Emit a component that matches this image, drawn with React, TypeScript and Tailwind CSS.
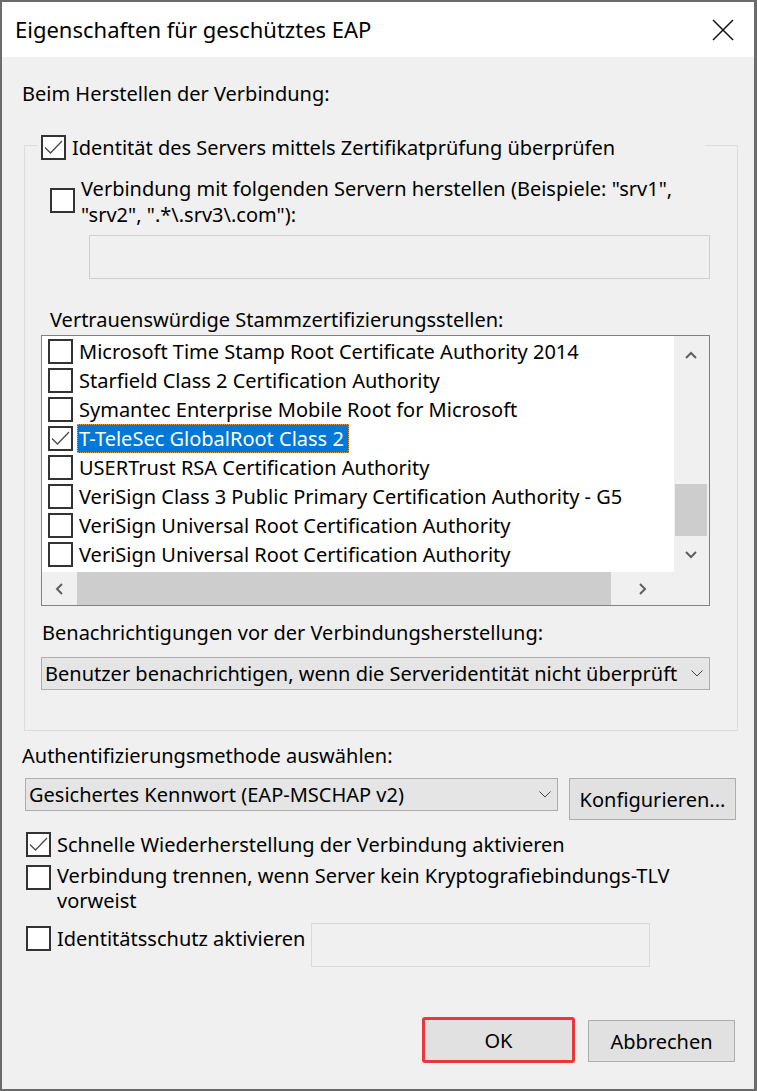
import type { ReactNode } from 'react';

const certs = [
  { name: 'Microsoft Time Stamp Root Certificate Authority 2014', checked: false },
  { name: 'Starfield Class 2 Certification Authority', checked: false },
  { name: 'Symantec Enterprise Mobile Root for Microsoft', checked: false },
  { name: 'T-TeleSec GlobalRoot Class 2', checked: true, selected: true },
  { name: 'USERTrust RSA Certification Authority', checked: false },
  { name: 'VeriSign Class 3 Public Primary Certification Authority - G5', checked: false },
  { name: 'VeriSign Universal Root Certification Authority', checked: false },
  { name: 'VeriSign Universal Root Certification Authority', checked: false },
];

function CheckBox({ checked = false, className = '' }: { checked?: boolean; className?: string }) {
  return (
    <span
      className={`flex h-[25px] w-[25px] shrink-0 items-center justify-center border-2 border-[#333333] bg-white ${className}`}
    >
      {checked && (
        <svg width="21" height="21" viewBox="0 0 21 21" fill="none">
          <path d="M2 10.5 L7.5 16 L19 4" stroke="#4a4a4a" strokeWidth="1.3" />
        </svg>
      )}
    </span>
  );
}

function Arrow({ dir }: { dir: 'up' | 'down' | 'left' | 'right' }) {
  const d = {
    up: 'M1 7 L6 2 L11 7',
    down: 'M1 2 L6 7 L11 2',
    left: 'M7 1 L2 6 L7 11',
    right: 'M2 1 L7 6 L2 11',
  }[dir];
  const vertical = dir === 'up' || dir === 'down';
  return (
    <svg width={vertical ? 12 : 9} height={vertical ? 9 : 12} viewBox={vertical ? '0 0 12 9' : '0 0 9 12'} fill="none">
      <path d={d} stroke="#606060" strokeWidth="2" />
    </svg>
  );
}

function DropChevron() {
  return (
    <svg width="12" height="7" viewBox="0 0 12 7" fill="none">
      <path d="M0.5 0.5 L6 6 L11.5 0.5" stroke="#444" strokeWidth="1" />
    </svg>
  );
}

function Select({ children, className = '' }: { children: ReactNode; className?: string }) {
  return (
    <div className={`flex h-[33px] items-center border border-[#adadad] bg-[#e5e5e5] pl-[3px] pr-[6px] ${className}`}>
      <span className="flex-1 overflow-hidden whitespace-nowrap">{children}</span>
      <span className="ml-[8px] flex items-center">
        <DropChevron />
      </span>
    </div>
  );
}

export default function App() {
  return (
    <div className="flex h-[1091px] w-[757px] flex-col border-2 border-r-[3px] border-[#6b6b6b] bg-[#f0f0f0] font-['Noto_Sans','Liberation_Sans',sans-serif] text-[20px] leading-[27px] text-black">
      {/* title bar */}
      <div className="flex h-[55px] shrink-0 items-center justify-between bg-white pl-[13px] pr-[20px]">
        <span className="text-[22px]">Eigenschaften für geschütztes EAP</span>
        <svg width="22" height="22" viewBox="0 0 22 22" fill="none">
          <path d="M1 1 L21 21 M21 1 L1 21" stroke="#111" strokeWidth="1.5" />
        </svg>
      </div>

      <p className="ml-[20px] mt-[23px]">Beim Herstellen der Verbindung:</p>

      {/* group box */}
      <div className="ml-[22px] mt-[38px] w-[714px] border border-[#dcdcdc] pb-[40px]">
        <div className="-mt-[12px] ml-[12px] flex h-[27px] w-[668px] items-center gap-[6px] bg-[#f0f0f0] pl-[4px]">
          <CheckBox checked />
          <span>Identität des Servers mittels Zertifikatprüfung überprüfen</span>
        </div>

        <div className="ml-[25px] mt-[15px] flex items-start gap-[6px]">
          <CheckBox className="mt-[12px]" />
          <span className="leading-[26px]">
            Verbindung mit folgenden Servern herstellen (Beispiele: "srv1",
            <br />
            "srv2", ".*\.srv3\.com"):
          </span>
        </div>

        <div className="ml-[64px] mt-[7px] h-[44px] w-[621px] border border-[#cfcfcf]" />

        <p className="ml-[25px] mt-[27px]">Vertrauenswürdige Stammzertifizierungsstellen:</p>

        {/* cert list */}
        <div className="ml-[16px] mt-[2px] flex h-[271px] w-[669px] flex-col border border-[#828282] bg-[#f0f0f0]">
          <div className="flex h-[236px]">
            <div className="w-[632px] overflow-hidden bg-white pl-[6px] pt-[1px]">
              {certs.map((c, i) => (
                <div key={i} className="flex h-[29px] items-center whitespace-nowrap">
                  <CheckBox checked={c.checked} className="h-[24px] w-[24px]" />
                  {c.selected ? (
                    <span className="ml-[4px] flex h-[29px] items-center border border-dotted border-[#e0a050] bg-[#0078d7] pl-[1px] pr-[4px] text-white">
                      {c.name}
                    </span>
                  ) : (
                    <span className="ml-[6px]">{c.name}</span>
                  )}
                </div>
              ))}
            </div>
            <div className="flex w-[33px] flex-col items-center">
              <div className="flex h-[33px] items-center justify-center pt-[5px]">
                <Arrow dir="up" />
              </div>
              <div className="h-[115px]" />
              <div className="h-[52px] w-[32px] bg-[#cdcdcd]" />
              <div className="flex flex-1 items-center justify-center">
                <Arrow dir="down" />
              </div>
            </div>
          </div>
          <div className="flex h-[33px] w-[632px] items-center">
            <div className="flex w-[35px] items-center justify-center">
              <Arrow dir="left" />
            </div>
            <div className="h-[33px] w-[534px] bg-[#cdcdcd]" />
            <div className="flex flex-1 items-center justify-center">
              <Arrow dir="right" />
            </div>
          </div>
        </div>

        <p className="ml-[17px] mt-[13px]">Benachrichtigungen vor der Verbindungsherstellung:</p>
        <Select className="ml-[16px] mt-[11px] w-[669px]">
          Benutzer benachrichtigen, wenn die Serveridentität nicht überprüft
        </Select>
      </div>

      <p className="ml-[20px] mt-[11px]">Authentifizierungsmethode auswählen:</p>
      <div className="ml-[23px] mt-[9px] flex items-start gap-[11px]">
        <Select className="w-[533px]">Gesichertes Kennwort (EAP-MSCHAP v2)</Select>
        <button className="h-[42px] w-[167px] border border-[#adadad] bg-[#e1e1e1]">Konfigurieren...</button>
      </div>

      <div className="ml-[24px] mt-[11px] flex items-start gap-[6px]">
        <CheckBox checked className="mt-[1px]" />
        <span>Schnelle Wiederherstellung der Verbindung aktivieren</span>
      </div>
      <div className="ml-[24px] mt-[5px] flex items-start gap-[6px]">
        <CheckBox className="mt-[2px]" />
        <span className="leading-[25px]">
          Verbindung trennen, wenn Server kein Kryptografiebindungs-TLV
          <br />
          vorweist
        </span>
      </div>
      <div className="ml-[24px] mt-[10px] flex items-start">
        <CheckBox className="mt-[3px]" />
        <span className="ml-[6px] mt-[2px] w-[248px] whitespace-nowrap">Identitätsschutz aktivieren</span>
        <div className="ml-[6px] h-[44px] w-[339px] border border-[#d9d9d9]" />
      </div>

      <div className="mr-[19px] mt-[50px] flex justify-end gap-[13px]">
        <button className="h-[46px] w-[153px] rounded-[3px] border-[3px] border-[#e8393a] bg-[#e1e1e1]">OK</button>
        <button className="mt-[3px] h-[42px] w-[147px] border border-[#adadad] bg-[#e1e1e1]">Abbrechen</button>
      </div>
    </div>
  );
}
